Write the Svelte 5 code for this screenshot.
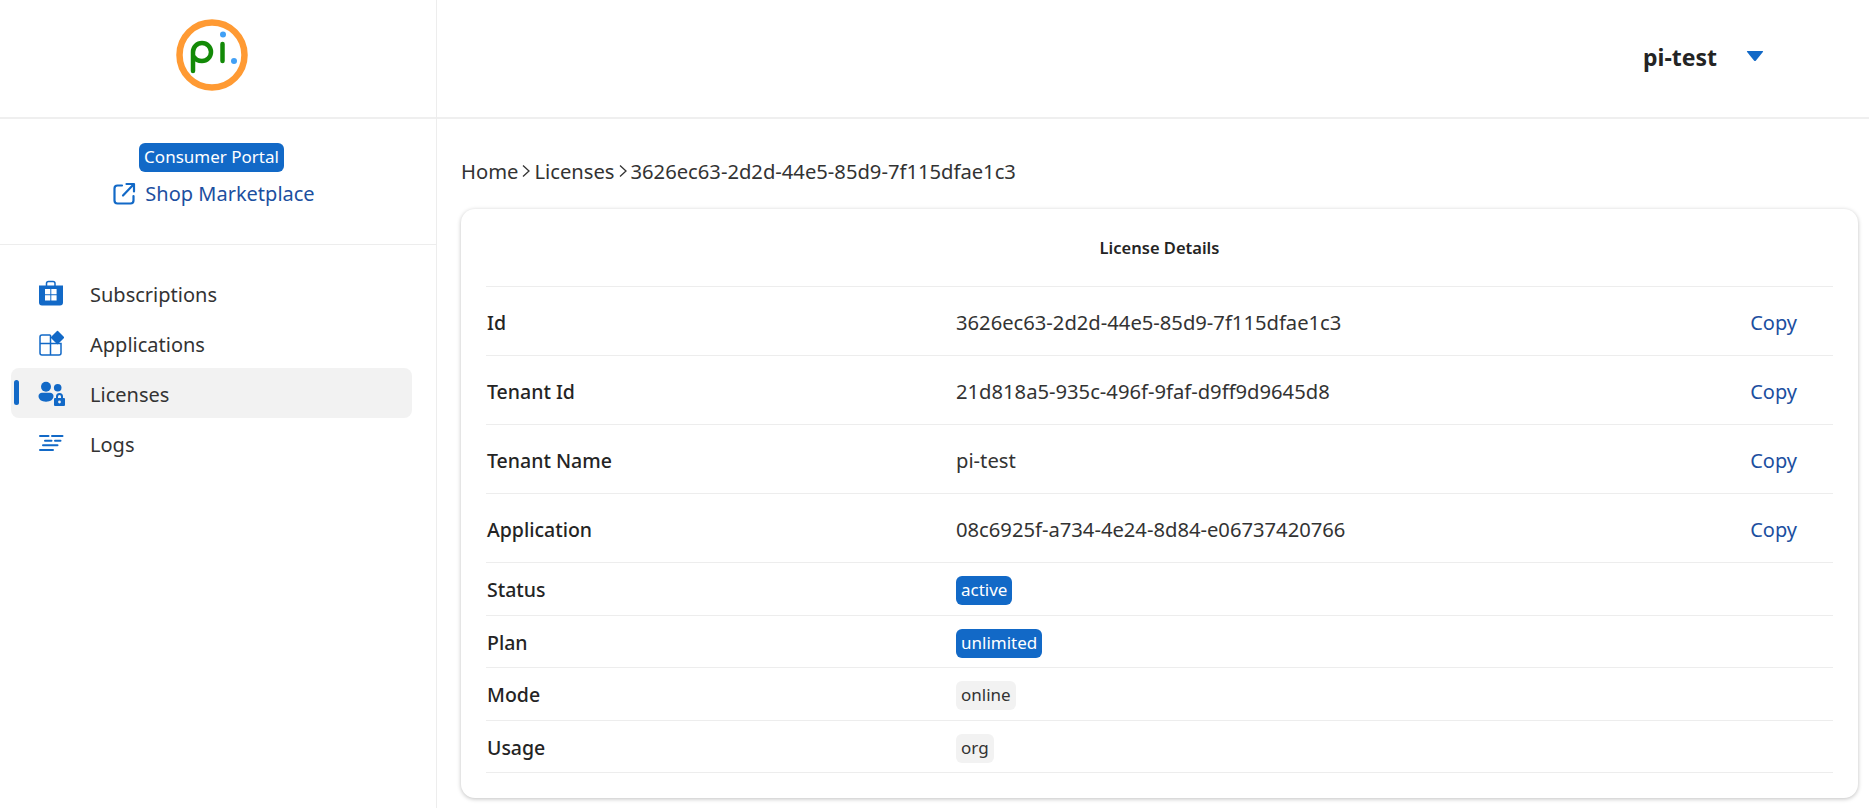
<script>
	const nav = [
		{ label: 'Subscriptions', icon: 'bag' },
		{ label: 'Applications', icon: 'apps' },
		{ label: 'Licenses', icon: 'people', active: true },
		{ label: 'Logs', icon: 'logs' }
	];

	const copyRows = [
		{ label: 'Id', value: '3626ec63-2d2d-44e5-85d9-7f115dfae1c3' },
		{ label: 'Tenant Id', value: '21d818a5-935c-496f-9faf-d9ff9d9645d8' },
		{ label: 'Tenant Name', value: 'pi-test' },
		{ label: 'Application', value: '08c6925f-a734-4e24-8d84-e06737420766' }
	];

	const badgeRows = [
		{ label: 'Status', value: 'active', primary: true },
		{ label: 'Plan', value: 'unlimited', primary: true },
		{ label: 'Mode', value: 'online' },
		{ label: 'Usage', value: 'org' }
	];
</script>

<div class="shell">
	<aside class="sidebar">
		<div class="logo">
			<svg width="76" height="76" viewBox="0 0 76 76" fill="none">
				<circle cx="38" cy="38" r="32.500" stroke="#ff9a33" stroke-width="6.500" />
				<path d="M19 54V35a9 9 0 1 1 9 9c-3.500 0-6.500-1.500-8-4" stroke="#138a07" stroke-width="4.500" stroke-linecap="round" />
				<path d="M48.500 27v17" stroke="#138a07" stroke-width="4.500" stroke-linecap="round" />
				<circle cx="49" cy="17.500" r="3" fill="#42a0f5" />
				<circle cx="60" cy="44" r="3" fill="#42a0f5" />
			</svg>
		</div>

		<div class="portal">
			<span class="badge primary portal-badge">Consumer Portal</span>
			<a class="shop" href="#top">
				<svg width="23" height="23" viewBox="0 0 23 23" fill="none" stroke="#1269c7" stroke-width="2.200" stroke-linecap="round" stroke-linejoin="round">
					<path d="M9 3.500H4.500a3 3 0 0 0-3 3v12a3 3 0 0 0 3 3h13a3 3 0 0 0 3-3V14" />
					<path d="M10 13.500 20.500 2.500M13.500 2h7.500v7.500" />
				</svg>
				Shop Marketplace
			</a>
		</div>

		<nav class="nav">
			{#each nav as item}
				<div class="nav-item" class:active={item.active}>
					<span class="nav-icon">
						{#if item.icon === 'bag'}
							<svg width="26" height="26" viewBox="0 0 26 26">
								<path d="M8.500 7V3.500a2 2 0 0 1 2-2h4.500a2 2 0 0 1 2 2V7" fill="none" stroke="#1269c7" stroke-width="1.500" />
								<path d="M1 5.500h24v17a3 3 0 0 1-3 3H4a3 3 0 0 1-3-3z" fill="#1269c7" />
								<path d="M7 9h5.300v5.300H7zM13.300 9h5.300v5.300h-5.300zM7 15.300h5.300v5.300H7zM13.300 15.300h5.300v5.300h-5.300z" fill="#fff" />
							</svg>
						{:else if item.icon === 'apps'}
							<svg width="26" height="26" viewBox="0 0 26 26">
								<path d="M12.500 5H4a2 2 0 0 0-2 2v16a2 2 0 0 0 2 2h17a2 2 0 0 0 2-2V13.500H2M12.500 5v20" fill="none" stroke="#1269c7" stroke-width="1.500" />
								<path d="M19.500 1.500 25.500 7.500 19.500 13.500 13.500 7.500z" fill="#1269c7" stroke="#1269c7" stroke-width="1.500" stroke-linejoin="round" />
							</svg>
						{:else if item.icon === 'people'}
							<svg width="28" height="26" viewBox="0 0 28 26" fill="#1269c7">
								<circle cx="8" cy="6.700" r="5" />
								<circle cx="19.700" cy="7.700" r="3.800" />
								<path d="M.5 16c0-2 1.600-3.300 3.500-3.300h8c2 0 3.500 1.300 3.500 3.300 0 3.500-3 5.700-7.500 5.700S.5 19.500.5 16z" />
								<path d="M17 26a1 1 0 0 1-1-1v-6a1 1 0 0 1 1-1h1v-1.500a3.500 3.500 0 0 1 7 0V18h1a1 1 0 0 1 1 1v6a1 1 0 0 1-1 1z" />
								<path d="M20 18h3v-1.500a1.500 1.500 0 0 0-3 0z" fill="#f2f2f2" />
								<circle cx="21.500" cy="22" r="1.400" fill="#f2f2f2" />
							</svg>
						{:else}
							<svg width="26" height="18" viewBox="0 0 26 18" stroke="#1269c7" stroke-width="2" stroke-linecap="round">
								<path d="M2 2h8.500M14 2h10.500M7 6.700h6.500M17 6.700h5.500M5 11.300h14.500M2 16h13" />
							</svg>
						{/if}
					</span>
					<span class="nav-label">{item.label}</span>
				</div>
			{/each}
		</nav>
	</aside>

	<div class="main">
		<header class="topbar">
			<span class="user">pi-test</span>
			<svg width="18" height="12" viewBox="0 0 18 12"><path d="M1.500 1h15q1 0 .4 1L10 10.500q-1 1-2 0L1.100 2q-.6-1 .4-1z" fill="#1269c7" /></svg>
		</header>

		<div class="content">
			<div class="crumbs">
				<span>Home</span>
				<svg width="12" height="14" viewBox="0 0 12 14" fill="none" stroke="#333" stroke-width="1.300"><path d="M3 1.500 9 7 3 12.500" /></svg>
				<span>Licenses</span>
				<svg width="12" height="14" viewBox="0 0 12 14" fill="none" stroke="#333" stroke-width="1.300"><path d="M3 1.500 9 7 3 12.500" /></svg>
				<span>3626ec63-2d2d-44e5-85d9-7f115dfae1c3</span>
			</div>

			<section class="card">
				<h2 class="title">License Details</h2>
				{#each copyRows as row}
					<div class="row tall">
						<span class="label">{row.label}</span>
						<span class="value">{row.value}</span>
						<a class="copy" href="#top">Copy</a>
					</div>
				{/each}
				{#each badgeRows as row}
					<div class="row short">
						<span class="label">{row.label}</span>
						<span class="value"><span class="badge" class:primary={row.primary}>{row.value}</span></span>
					</div>
				{/each}
			</section>
		</div>
	</div>
</div>

<style>
	:global(body) {
		background: #fff;
		font-family: 'Noto Sans', 'Open Sans', sans-serif;
		color: #242424;
	}

	.shell {
		display: flex;
		height: 808px;
		overflow: hidden;
	}

	.sidebar {
		width: 436px;
		flex-shrink: 0;
		border-right: 1px solid #ededed;
	}

	.logo {
		height: 119px;
		display: flex;
		align-items: flex-start;
		justify-content: center;
		padding: 17px 12px 0 0;
		box-sizing: border-box;
		border-bottom: 2px solid #efefef;
	}

	.portal {
		height: 126px;
		box-sizing: border-box;
		padding-top: 24px;
		display: flex;
		flex-direction: column;
		align-items: center;
		gap: 8px;
		border-bottom: 1px solid #ededed;
	}

	.portal-badge {
		font-size: 17px;
		padding: 0 5px;
		margin-right: 13px;
	}

	.shop {
		display: flex;
		align-items: center;
		gap: 9px;
		color: #1c4f9f;
		font-size: 20px;
		text-decoration: none;
		margin-right: 8px;
	}

	.nav {
		padding: 23px 24px 0 11px;
	}

	.nav-item {
		position: relative;
		display: flex;
		align-items: center;
		height: 50px;
		padding-left: 27px;
		border-radius: 8px;
		font-size: 20px;
		color: #333;
	}

	.nav-item.active {
		background: #f2f2f2;
	}

	.nav-item.active::before {
		content: '';
		position: absolute;
		left: 3px;
		top: 12px;
		width: 5px;
		height: 25px;
		border-radius: 3px;
		background: #1269c7;
	}

	.nav-icon {
		width: 52px;
		display: flex;
		align-items: center;
	}

	.nav-label {
		padding-top: 3px;
	}

	.main {
		flex: 1;
		min-width: 0;
	}

	.topbar {
		height: 119px;
		box-sizing: border-box;
		border-bottom: 2px solid #efefef;
		display: flex;
		align-items: center;
		justify-content: flex-end;
		gap: 29px;
		padding: 0 105px 6px 0;
	}

	.user {
		font-size: 23px;
		font-weight: 700;
		padding-top: 2px;
	}

	.content {
		padding: 37px 11px 0 24px;
	}

	.crumbs {
		display: flex;
		align-items: center;
		gap: 2px;
		font-size: 20.200px;
		color: #333;
		height: 30px;
	}

	.card {
		margin-top: 23px;
		height: 589px;
		box-sizing: border-box;
		padding: 0 25px;
		border-radius: 14px;
		box-shadow: 0 1px 4px rgba(0, 0, 0, 0.25);
	}

	.title {
		margin: 0;
		height: 78px;
		display: flex;
		align-items: center;
		justify-content: center;
		font-size: 16.500px;
		font-weight: 600;
		border-bottom: 1px solid #ededed;
		box-sizing: border-box;
	}

	.row {
		display: flex;
		align-items: center;
		box-sizing: border-box;
		padding-top: 2px;
		border-bottom: 1px solid #ededed;
	}

	.tall {
		height: 69px;
	}

	.short {
		height: 52.500px;
	}

	.label {
		width: 470px;
		box-sizing: border-box;
		padding-left: 1px;
		flex-shrink: 0;
		font-size: 19.500px;
		font-weight: 500;
	}

	.value {
		flex: 1;
		font-size: 20.200px;
		color: #333;
	}

	.copy {
		color: #1c4f9f;
		font-size: 20px;
		text-decoration: none;
		margin-right: 36px;
	}

	.badge {
		display: inline-block;
		height: 29px;
		line-height: 28px;
		padding: 0 5px;
		border-radius: 6px;
		background: #f2f2f2;
		color: #333;
		font-size: 17px;
	}

	.badge.primary {
		background: #1269c7;
		color: #fff;
	}
</style>
